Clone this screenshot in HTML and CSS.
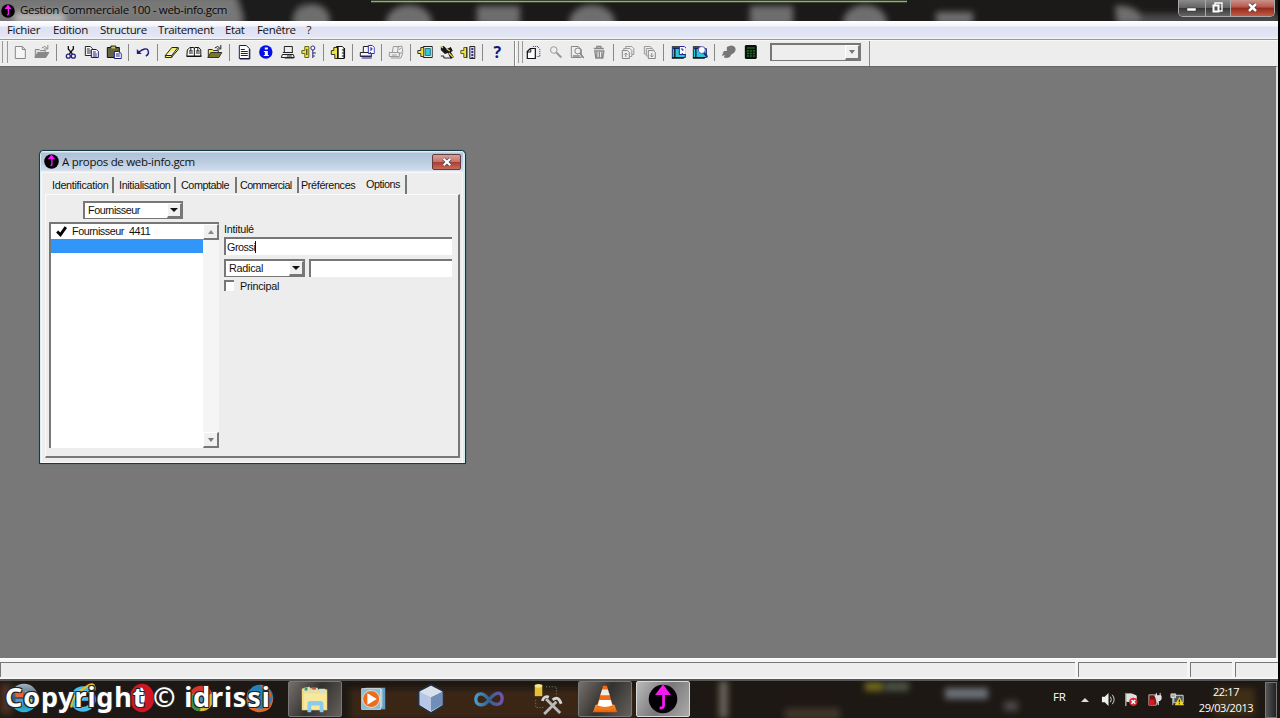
FILE: index.html
```html
<!DOCTYPE html>
<html lang="fr">
<head>
<meta charset="utf-8">
<title>Gestion Commerciale 100 - web-info.gcm</title>
<link rel="stylesheet" href="styles.css">
</head>
<body>
<svg class="defs" width="0" height="0">
  <defs>
    <filter id="soft"><feGaussianBlur stdDeviation="3"/></filter>
    <linearGradient id="orb" x2="0" y2="1"><stop stop-color="#a5b4bf"/><stop offset=".5" stop-color="#39566c"/><stop offset="1" stop-color="#25bde8"/></linearGradient>
    <linearGradient id="orange" x2="0" y2="1"><stop stop-color="#ff9b2a"/><stop offset="1" stop-color="#e75e0a"/></linearGradient>
    <linearGradient id="vs"><stop stop-color="#4b9ac6"/><stop offset=".5" stop-color="#316294"/><stop offset="1" stop-color="#7153ae"/></linearGradient>
    <symbol id="logo" viewBox="0 0 28 28"><circle cx="14" cy="14" r="13.6" fill="#050006"/><path d="M14 1 21 10H16V20Q16 23 12 23V20.5Q13.500 20.500 13.500 19V10H7Z" fill="#f41bf0"/></symbol>
    <symbol id="page" viewBox="0 0 16 16"><path d="M3.500 2.500h7l3 3v9h-10zM10.500 2.500v3h3" fill="#f5f5f5" stroke="#888"/></symbol>
    <symbol id="open-grey" viewBox="0 0 16 16"><path d="M1.500 13V5.500h4l1 1h5v2" fill="#ddd" stroke="#888"/><path d="M4 8.500h11l-3 5H1z" fill="#888" stroke="#888"/><path d="M8 4q3-3 5 0m1-3v4h-4" fill="none" stroke="#888"/></symbol>
    <symbol id="cut" viewBox="0 0 16 16"><path d="M5.500 2v3l4 5M10.500 2v3l-4 5" fill="none" stroke="#111" stroke-width="1.300"/><circle cx="5.500" cy="12.200" r="2" fill="none" stroke="#20207c" stroke-width="1.300"/><circle cx="10.500" cy="12.200" r="2" fill="none" stroke="#20207c" stroke-width="1.300"/></symbol>
    <symbol id="copy" viewBox="0 0 16 16"><path d="M1.500 2.500h5l2 2v7h-7z" fill="#fff" stroke="#222"/><path d="M3 5h3M3 7h4M3 9h4" stroke="#222"/><path d="M7.500 5.500h5l2 2v6h-7z" fill="#fff" stroke="#171779"/><path d="M9 8h3M9 10h4M9 12h4" stroke="#171779"/></symbol>
    <symbol id="paste" viewBox="0 0 16 16"><path d="M1.500 3.500h12v10h-12z" fill="#636343" stroke="#111"/><path d="M5 4.500V2h5v2.500" fill="#d3c648" stroke="#222"/><path d="M8.500 7.500h4l3 2v5h-7z" fill="#fff" stroke="#1d1d80"/><path d="M10 10h4M10 12h4" stroke="#1d1d80"/></symbol>
    <symbol id="undo" viewBox="0 0 16 16"><path d="M4 8q7-5 9-2 2 4-2 6" fill="none" stroke="#202080" stroke-width="1.400"/><path d="M2 5v5h5z" fill="#202080"/></symbol>
    <symbol id="eraser" viewBox="0 0 16 16"><path d="M1.500 11.500 8 3.500h6l-6 8zM1.500 11.500v2h6l7-8v-2M8 11.500v2" fill="#f5ed63" stroke="#222"/></symbol>
    <symbol id="book" viewBox="0 0 16 16"><path d="M1.500 6 4 3.500h4l.5 1 .5-1h4l2 2.500v6.500h-14z" fill="#fff" stroke="#111"/><path d="M8.500 4v9M3 7h4M3 9h4M10 7h4M10 9h4M5 4v3M12 4v3M1 12h15" stroke="#111"/></symbol>
    <symbol id="open" viewBox="0 0 16 16"><path d="M1.500 5.500h4l1 1h5v7h-10z" fill="#efe847" stroke="#333"/><path d="M4 8.500h11l-3 5H1z" fill="#76762a" stroke="#333"/><path d="M8 4q3-3 5 0m1-3v4h-4" fill="none" stroke="#222"/></symbol>
    <symbol id="doc" viewBox="0 0 16 16"><path d="M3.500 1.500h7l3 3v10h-10z" fill="#fff" stroke="#18187e"/><path d="M5 5.500h4M5 7.500h7M5 9.500h7M5 11.500h7" stroke="#18187e"/><path d="M14 5v10H4" fill="none" stroke="#222"/></symbol>
    <symbol id="info" viewBox="0 0 16 16"><circle cx="8" cy="8" r="6.700" fill="#0710e4"/><path d="M7 3.500h3v2H7zM6 7h4v4h1v1H6v-1h1V8H6z" fill="#fff"/></symbol>
    <symbol id="pc" viewBox="0 0 16 16"><path d="M4.500 2.500h8v6h-8zM2.500 10.500h11l1 3h-13zM3 8.500h10" fill="#eee" stroke="#222"/><path d="M7 12h5M5 14h9" stroke="#222"/></symbol>
    <symbol id="key" viewBox="0 0 16 16"><path d="M4 2.500h4v11H4v-4H1v-3h3z" fill="#eee138" stroke="#6c6619"/><path d="M6 5v6" stroke="#222"/><circle cx="12" cy="4" r="2" fill="#fff" stroke="#26267b"/><path d="M12 6v8M12 9h3M12 12h2" stroke="#26267b"/></symbol>
    <symbol id="puzzle" viewBox="0 0 16 16"><path d="M6.500 2.500h6l2 2v10h-8z" fill="#fff" stroke="#111"/><path d="M4 3.500h4v11H5v-4H1.500v-4H4z" fill="#efe23d" stroke="#333"/><path d="M8 2v13M14.500 4v10" stroke="#111" stroke-width="1.500"/><path d="M12 6h2M12 9h2M12 12h2" stroke="#111"/></symbol>
    <symbol id="print" viewBox="0 0 16 16"><path d="M4.500 8.500v-6h6v7M1.500 8.500h11v4h-11z" fill="#f7f7f7" stroke="#222"/><path d="M9.500 1.500h4l2 2v6h-6z" fill="#fff" stroke="#3034ad"/><path d="M2 12h11M11 4h2v2h-2M11.500 8v1M3 14h10" fill="none" stroke="#242488"/></symbol>
    <symbol id="print-grey" viewBox="0 0 16 16"><path d="M4.500 8.500l1-6h5l-1 6M1.500 8.500h10v4h-10zM9 3l5-1 1 6-4 2M3 14h10l2-5" fill="#eee" stroke="#999"/><path d="M11 6l2-2M4 11h5" stroke="#999"/></symbol>
    <symbol id="puzzle-blue" viewBox="0 0 16 16"><path d="M6.500 2.500h9v11h-9z" fill="#eee" stroke="#222"/><path d="M8.500 4.500h5v7h-5z" fill="#30ccd4" stroke="#227984"/><path d="M4 3.500h3v9H4v-3H1v-3h3z" fill="#efe23d" stroke="#333"/></symbol>
    <symbol id="people" viewBox="0 0 16 16"><path d="M2 3l3-1 3 3 4-2 2 4-2 1 3 5-3 2-3-6-3 1-4-4z" fill="#181818"/><path d="M2 2l2 2M8 5l3 2M10 9l4 4" stroke="#d8cd50" stroke-width="1.500"/><path d="M2 12h3v2h7" fill="none" stroke="#222"/></symbol>
    <symbol id="puzzle-list" viewBox="0 0 16 16"><path d="M4 3.500h3v10H4v-4H1v-3h3z" fill="#efe23d" stroke="#645e18"/><path d="M7 3v11" stroke="#222"/><path d="M10 2.500h5v12h-5z" fill="#dcdcf2" stroke="#222"/><path d="M12.500 4v10" stroke="#30308e" stroke-width="2" stroke-dasharray="2 1"/></symbol>
    <symbol id="files" viewBox="0 0 16 16"><path d="M7 2.500h5l2 3v7h-3" fill="none" stroke="#2d2d76" stroke-dasharray="1 1"/><path d="M1.500 7.500l3-3h5v10h-8z" fill="#fff" stroke="#111" stroke-width="1.200"/><path d="M5 4v4H1" fill="none" stroke="#111"/></symbol>
    <symbol id="lens" viewBox="0 0 16 16"><circle cx="6" cy="6" r="3.300" fill="#eee" stroke="#999"/><path d="M8.500 8.500l5 5" stroke="#999" stroke-width="2"/></symbol>
    <symbol id="preview" viewBox="0 0 16 16"><path d="M2.500 2.500h7l3 3v8h-10z" fill="#eee" stroke="#888"/><circle cx="9" cy="7" r="3" fill="#eee" stroke="#888"/><path d="M11 9l4 5M4 12h7" stroke="#888" stroke-width="1.400"/></symbol>
    <symbol id="trash" viewBox="0 0 16 16"><path d="M3 4.500h10M6 4V2.500h4V4M4 7h9l-1 7H5zM6 8v6M8.500 8v6M11 8v6" fill="none" stroke="#888" stroke-width="1.300"/></symbol>
    <symbol id="stack-up" viewBox="0 0 16 16"><path d="M6 4V2.500h6l2 2v6h-2M4 6V4.500h6l2 2v6h-2" fill="none" stroke="#999"/><path d="M2.500 6.500h5l2 2v6h-7zM6 13V9M4.500 10.500 6 9l1.500 1.500" fill="#eee" stroke="#888"/></symbol>
    <symbol id="stack-down" viewBox="0 0 16 16"><path d="M4 10H2.500V2.500h6l2 2M6 12H4.500V4.500h6l2 2" fill="none" stroke="#999"/><path d="M6.500 6.500h5l2 2v6h-7zM10 9v4M8.500 11.500 10 13l1.500-1.500" fill="#eee" stroke="#888"/></symbol>
    <symbol id="cards" viewBox="0 0 16 16"><path d="M1.500 4.500h13v9h-13z" fill="#28c7dc" stroke="#132966"/><path d="M1 3h8M4 5v8M1 14h12" stroke="#111" stroke-width="1.300"/><path d="M8.500 2.500h5l2 2v6h-7z" fill="#fff" stroke="#28289a"/><path d="M10 5h2v2M11.500 9v1" fill="none" stroke="#28289a"/></symbol>
    <symbol id="cards-find" viewBox="0 0 16 16"><path d="M1.500 4.500h13v9h-13z" fill="#28c7dc" stroke="#132966"/><path d="M1 3h8M4 5v8M1 14h12" stroke="#111" stroke-width="1.300"/><circle cx="10" cy="6" r="3.500" fill="#fff" stroke="#5860c6"/><path d="M12 9l4 4" stroke="#222a88" stroke-width="2"/></symbol>
    <symbol id="blob" viewBox="0 0 16 16"><path d="M6 3q5-3 8 0 2 3-1 6-3 1-4 4-4 2-6 0l1-2-3 1 2-5h3z" fill="#777"/></symbol>
    <symbol id="calc" viewBox="0 0 16 16"><path d="M3 1h10l1 1v12l-1 1H3l-1-1V2z" fill="#051407"/><path d="M4 3h8v2H4z" fill="#174b1d"/><path d="M4 7h8M4 9.500h8M4 12h8" stroke="#27722b" stroke-width="1.500" stroke-dasharray="2 1"/></symbol>
  </defs>
</svg>
<div class="screen">
  <div class="app">
    <header class="titlebar">
      <svg class="scenery" width="1280" height="21">
        <rect width="1280" height="21" fill="#1c1a19"/>
        <g filter="url(#soft)" fill="#6e6e6e"><rect x="-10" y="-5" width="252" height="32" fill="#777"/><rect x="15" y="13" width="50" height="9" fill="#bbb"/><path d="M235-5h70l-12 30h-48z" fill="#1a1a1a"/><ellipse cx="312" cy="20" rx="18" ry="16"/><ellipse cx="409" cy="23" rx="23" ry="18"/><ellipse cx="592" cy="23" rx="23" ry="18"/><ellipse cx="865" cy="23" rx="22" ry="18"/><path d="M477 6h43v19h-43zM750 6h43v19h-43zM936 12h37v12h-37zM1115 6q22-3 33 18h-31z"/><path d="M1140 14h140v12h-140z" fill="#4b4b4b"/></g>
        <path d="M371 1.500h536" stroke="#8bb765" stroke-width="1.500"/>
      </svg>
      <svg class="app-logo"><use href="#logo"/></svg>
      <span class="app-title">Gestion Commerciale 100 - web-info.gcm</span>
      <div class="win-buttons">
        <span class="wb min"><svg width="26" height="16"><path d="M8 8h9v3H8z" fill="#fff" stroke="#333" stroke-width=".5"/></svg></span>
        <span class="wb max"><svg width="24" height="16"><path d="M9 3h7v8h-7z" fill="none" stroke="#fff" stroke-width="1.300"/><path d="M7.500 5.500h5v6h-5z" fill="#555" stroke="#fff" stroke-width="2"/></svg></span>
        <span class="wb close"><svg width="43" height="16"><path d="M18 4l7 7M25 4l-7 7" stroke="#533" stroke-width="4"/><path d="M18 4l7 7M25 4l-7 7" stroke="#fff" stroke-width="2.500"/></svg></span>
      </div>
    </header>
    <nav class="menu"><span class="m1">Fichier</span><span class="m2">Edition</span><span class="m3">Structure</span><span class="m4">Traitement</span><span class="m5">Etat</span><span class="m6">Fenêtre</span><span>?</span></nav>
    <div class="toolbar">
      <div class="band first"><i class="grip"></i>
        <svg><use href="#page"/></svg><svg><use href="#open-grey"/></svg><i class="sep"></i>
        <svg><use href="#cut"/></svg><svg><use href="#copy"/></svg><svg><use href="#paste"/></svg><i class="sep"></i>
        <svg><use href="#undo"/></svg><i class="sep"></i>
        <svg><use href="#eraser"/></svg><svg><use href="#book"/></svg><svg><use href="#open"/></svg><i class="sep"></i>
        <svg><use href="#doc"/></svg><svg><use href="#info"/></svg><svg><use href="#pc"/></svg><svg><use href="#key"/></svg><i class="sep"></i>
        <svg><use href="#puzzle"/></svg><i class="sep"></i><svg><use href="#print"/></svg><i class="sep"></i><svg><use href="#print-grey"/></svg><i class="sep"></i>
        <svg><use href="#puzzle-blue"/></svg><svg><use href="#people"/></svg><svg><use href="#puzzle-list"/></svg><i class="sep"></i><b class="help">?</b>
      </div>
      <div class="band second"><i class="grip"></i>
        <svg><use href="#files"/></svg><svg><use href="#lens"/></svg><svg><use href="#preview"/></svg><svg><use href="#trash"/></svg><i class="sep"></i>
        <svg><use href="#stack-up"/></svg><svg><use href="#stack-down"/></svg><i class="sep"></i><svg><use href="#cards"/></svg><svg><use href="#cards-find"/></svg><i class="sep"></i>
        <svg><use href="#blob"/></svg><svg><use href="#calc"/></svg>
        <div class="combo tool-combo"><span></span><i class="drop"></i></div>
      </div>
    </div>
    <main class="workspace">
      <section class="dialog">
        <div class="dialog-title"><svg><use href="#logo"/></svg><span>A propos de web-info.gcm</span><i class="dialog-close"><svg viewBox="0 0 28 15"><path d="M11 4l7 7M18 4l-7 7" stroke="#454c5c" stroke-width="4"/><path d="M11 4l7 7M18 4l-7 7" stroke="#fff" stroke-width="2.300"/></svg></i></div>
        <div class="dialog-body">
          <div class="tabs"><span class="t1">Identification</span><span class="t2">Initialisation</span><span class="t3">Comptable</span><span class="t4">Commercial</span><span class="t5">Préférences</span><span class="t6">Options</span></div>
          <div class="panel">
            <div class="left">
              <div class="combo type"><span>Fournisseur</span><i class="drop"></i></div>
              <div class="listbox">
                <div class="items"><div class="item"><svg viewBox="0 0 12 12"><path d="M2 6l3 3 5-7" fill="none" stroke="#000" stroke-width="2.700"/></svg><span>Fournisseur&nbsp; 4411</span></div><div class="item selected"></div></div>
                <div class="scroll"><i class="up"></i><i class="drop"></i></div>
              </div>
            </div>
            <div class="form">
              <label>Intitulé</label>
              <div class="field"><span>Grossi</span><i class="caret"></i></div>
              <div class="row"><div class="combo radical"><span>Radical</span><i class="drop"></i></div><div class="field"></div></div>
              <div class="check"><i></i><span>Principal</span></div>
            </div>
          </div>
        </div>
      </section>
    </main>
    <footer class="status"><span class="s1"></span><span class="s2"></span><span class="s3"></span><span class="s4"></span></footer>
  </div>
  <footer class="taskbar">
    <svg class="scenery" width="1280" height="37"><rect width="1280" height="37" fill="#1d1813"/><g filter="url(#soft)"><path d="M350 8h285v30H350z" fill="#3a2817"/><path d="M0 3h12v30H0z" fill="#503221"/><path d="M719 0h9v37h-9z" fill="#666056"/><path d="M865 1h18v9h-18z" fill="#736b20"/><path d="M885 1h24v9h-24z" fill="#4c5446"/><path d="M945 7h43v11h-43z" fill="#6b7178"/><path d="M785 27h55v12h-55z" fill="#413629"/><path d="M1004 20h14v10h-14z" fill="#49464a"/><path d="M1215 7h40v28h-40z" fill="#3d2d16"/></g></svg>
    <div class="launchers">
      <svg viewBox="0 0 32 36"><circle cx="16" cy="18" r="15" fill="url(#orb)"/><path d="M7 12l8-2v7H7z" fill="#e96339"/><path d="M17 10l7 2v6l-7-1z" fill="#87ba4c"/><path d="M7 19h8v7l-8-2z" fill="#4c9ad8"/><path d="M17 19h8l-1 5-7 2z" fill="#e7bf43"/></svg>
      <svg viewBox="0 0 32 36"><circle cx="16" cy="19" r="11" fill="none" stroke="#4bbce9" stroke-width="5"/><path d="M7 19h21" stroke="#4bbce9" stroke-width="4"/><path d="M4 28Q1 17 23 4q6-2 5 6" fill="none" stroke="#e5bc30" stroke-width="2.500"/></svg>
      <svg viewBox="0 0 32 36"><ellipse cx="16" cy="18" rx="13" ry="15" fill="#ce1723"/><ellipse cx="15" cy="17" rx="4" ry="10" fill="#fff"/></svg>
      <svg viewBox="0 0 32 36"><circle cx="16" cy="19" r="13" fill="#ddbc36"/><path d="M4 13A13 13 0 0 1 28 13L17 18z" fill="#cf3830"/><path d="M4 13A13 13 0 0 0 15 32l2-13z" fill="#388b42"/><circle cx="16" cy="19" r="6" fill="#478bd0" stroke="#ddd" stroke-width="2"/></svg>
      <svg viewBox="0 0 32 36"><circle cx="16" cy="18" r="14" fill="#2481bc"/><path d="M4 8q-3 16 8 21 14 3 18-13 0 18-16 17Q-4 31 4 8M16 4q12 1 12 14l-7-7z" fill="#df6628"/></svg>
    </div>
    <div class="tasks">
      <span class="task active"><svg viewBox="0 0 34 34"><path d="M3 6l8-2 2 3h17v22H3z" fill="#f4dc7c"/><path d="M5 5h7v5H5zM13 5h7v5h-7zM21 6h7v5h-7z" fill="#d8e3c5"/><path d="M6 5h3v3H6z" fill="#3c9c54"/><path d="M14 5h4v2h-4z" fill="#d15036"/><path d="M5 11h24v17H5z" fill="#f8e89f"/><path d="M9 31v-9q0-3 3-3h11q3 0 3 3v9h-4v-7h-9v7z" fill="#8accec"/></svg></span>
      <span class="task"><svg viewBox="0 0 34 34"><path d="M9 5h21v23H9z" fill="#649ec5"/><path d="M7 6h20v20H7z" fill="#b3d3df"/><path d="M5 6h20v22H5z" fill="#85bed9" stroke="#d1d8d8"/><circle cx="15" cy="17" r="9" fill="#ed6b1c" stroke="#e6e2de"/><path d="M11 11v12l10-6z" fill="#fff"/></svg></span>
      <span class="task"><svg viewBox="0 0 34 34"><path d="M17 2l13 7v15l-13 8-13-8V9z" fill="#f2f5fb" stroke="#243147" stroke-width="2"/><path d="M5 9l12 6v15L5 23z" fill="#b7c6e4"/><path d="M29 9l-12 6v15l12-7z" fill="#6f8eb8"/><path d="M5 9l12-6 12 6-12 6z" fill="#d8e0ea"/></svg></span>
      <span class="task"><svg viewBox="0 0 34 34"><path d="M17 18C12 10 4 9 3 17c0 8 9 8 14 1s13-11 14-2c0 9-9 8-14 2" fill="none" stroke="url(#vs)" stroke-width="3.500"/></svg></span>
      <span class="task"><svg viewBox="0 0 34 34"><path d="M4 2h8v12H4z" fill="#e6bf36"/><ellipse cx="8" cy="3" rx="4" ry="2" fill="#f5e58c"/><path d="M16 4h11v10M5 18v8h10" fill="none" stroke="#829184" stroke-dasharray="1 2"/><path d="M14 33l13-13M16 17l15 15" stroke="#bbb" stroke-width="3"/><path d="M12 19q2-6 7-4M23 18q6-5 9 4" fill="none" stroke="#d5d5d5" stroke-width="3"/></svg></span>
      <span class="task active"><svg viewBox="0 0 34 34"><path d="M7 23h20l3 8H4z" fill="url(#orange)"/><path d="M15 3h4l7 23H8z" fill="#f06d16"/><path d="M14 7h6l2 6H12z" fill="#f2eee7"/><path d="M11 18h12l2 6q-8 3-16 0z" fill="#fff"/></svg></span>
      <span class="task current"><svg viewBox="0 0 28 28"><circle cx="14" cy="14" r="12.500" fill="#050006"/><path d="M14 1 21 10.500H7z" fill="#f41bf0"/><path d="M14.500 9V20Q14.500 22 11 22" fill="none" stroke="#f41bf0" stroke-width="2.400"/></svg></span>
    </div>
    <div class="tray"><span class="lang">FR</span><i class="tri"></i>
      <svg class="sound" viewBox="0 0 16 16"><path d="M1 5h3l4-4v14l-4-4H1z" fill="#eee"/><path d="M10 5q2 3 0 6M12 3q4 5 0 10" fill="none" stroke="#ddd"/></svg>
      <svg class="flag" viewBox="0 0 16 16"><path d="M2 1v14M3 2h5l5 2v6H3z" fill="#ddd" stroke="#eee"/><circle cx="10" cy="10.500" r="4.500" fill="#d72d31"/><path d="M8 8.500l4 4M12 8.500l-4 4" stroke="#fff" stroke-width="1.500"/></svg>
      <svg class="battery" viewBox="0 0 16 16"><path d="M2 3h8v11H2z" fill="#771111" stroke="#bbb"/><path d="M10 1v3M14 1v3M8 4h7v4l-3 2v4" fill="#ddd" stroke="#eee"/><path d="M2 8h6v6H2z" fill="#d31c20"/></svg>
      <svg class="network" viewBox="0 0 16 16"><path d="M4 3.500h10v8H4z" fill="#455660" stroke="#ddd"/><path d="M1 2h5v4H1zM3 6v8" fill="#aaa" stroke="#ddd"/><path d="M10 5l5 9H5z" fill="#f1d423"/><path d="M10 8v3M10 12v1" stroke="#322" stroke-width="1.300"/></svg>
      <div class="clock"><span>22:17</span><span>29/03/2013</span></div><i class="peek"></i>
    </div>
    <div class="watermark">Copyright © idrissi</div>
  </footer>
</div>
</body>
</html>
```
FILE: styles.css
```css
* { box-sizing: border-box; }
body { margin: 0; background: #000; }
.defs { position: absolute; }
.screen { width: 1280px; height: 718px; display: flex; flex-direction: column; overflow: hidden; font-family: "Open Sans", "Noto Sans", sans-serif; font-size: 11px; color: #111; }
.app { width: 1278px; height: 681px; display: flex; flex-direction: column; }
.titlebar { height: 21px; position: relative; display: flex; overflow: hidden; align-items: center; }
.scenery { position: absolute; left: 0; top: 0; z-index: 0; }
.app-logo { width: 14px; height: 14px; position: relative; margin-left: 1px; }
.app-title { position: relative; margin-left: 5px; font-size: 11.500px; letter-spacing: -.33px; line-height: 20px; padding-bottom: 1px; color: #080808; white-space: nowrap; text-shadow: 0 0 5px #999; }
.win-buttons { position: relative; margin-left: auto; margin-right: 3px; align-self: flex-start; height: 17px; display: flex; border: 1px solid #aaa; border-top: 0; border-radius: 0 0 5px 5px; overflow: hidden; }
.wb { height: 16px; background: linear-gradient(#8b8b8b, #626262 48%, #343434 50%, #666); border-right: 1px solid #aaa; }
.wb svg { display: block; }
.wb.close { background: linear-gradient(#c9928c, #b95549 45%, #91291d 50%, #c55a45); border: 0; }
.menu { height: 19px; display: flex; padding-left: 7px; background: linear-gradient(#fff 0, #f3f4fb 28%, #dde1f1 35%, #e4e6f5 85%, #f2f2f7); border-bottom: 1px solid #999; line-height: 17px; font-size: 11.500px; letter-spacing: -.35px; white-space: nowrap; }
.m1 { width: 46px; } .m2 { width: 47px; } .m3 { width: 58px; } .m4 { width: 67px; } .m5 { width: 32px; } .m6 { width: 49.500px; }
.toolbar { height: 26px; display: flex; background: #ededed; border-top: 1px solid #f9f9f4; }
.band { display: flex; align-items: center; border-right: 1px solid #888; height: 25px; padding-bottom: 3px; }
.band.first { width: 515px; padding-left: 2px; }
.band.second { width: 355px; padding-left: 2px; border-left: 1px solid #fff; }
.grip { width: 6px; height: 22px; border-left: 1px solid #999; border-right: 1px solid #999; margin-right: 1.200px; }
.second .grip { margin-right: 0; width: 5px; }
.band > svg { width: 21.650px; height: 16px; padding: 0 2.800px; flex: none; position: relative; }
.sep { width: 1px; height: 17px; margin: 0 3.180px; background: #888; flex: none; }
.help { width: 21.600px; text-align: center; color: #17177b; font-size: 16px; line-height: 17px; }
.combo { display: flex; border: 1px solid #777; border-top-width: 2px; border-left-width: 2px; background: #fff; height: 17px; }
.combo span { flex: 1; padding-left: 3px; line-height: 14px; }
.drop, .up { width: 15px; height: 14px; display: flex; align-items: center; justify-content: center; background: #f0f0f0; border: 1px solid #fff; border-right: 2px solid #777; border-bottom: 2px solid #777; }
.drop::after { content: ""; border: 4px solid transparent; border-top: 4px solid #111; border-bottom: 0; }
.up::after { content: ""; border: 3.500px solid transparent; border-bottom: 4px solid #888; border-top: 0; }
.tool-combo { width: 91px; height: 18px; margin-left: 8.500px; background: #eee; }
.tool-combo .drop { height: 15px; }
.tool-combo .drop::after, .scroll .drop::after { border-top-color: #777; border-left-width: 3.500px; border-right-width: 3.500px; }
.workspace { height: 592px; position: relative; background: #787878; border-top: 1px solid #666; border-right: 2px solid #ddd; }
.dialog { position: absolute; left: 39px; top: 83px; width: 427px; height: 314px; display: flex; flex-direction: column; padding: 0 2px 2px 1px; background: #d5edf2; border: 1px solid #163b40; border-right-color: #063d42; border-radius: 5px 5px 0 0; overflow: hidden; box-shadow: 0 0 1px #174f56; }
.dialog-title { height: 21px; flex: none; display: flex; align-items: center; padding: 0 2px 0 3px; background: linear-gradient(#edf3f8 0, #afc2d8 12%, #bdcde0 55%, #cddbed 90%, #f0f3f8); font-size: 11.500px; }
.dialog-title > svg { width: 15px; height: 15px; }
.dialog-title > span { margin-left: 3px; letter-spacing: -.3px; }
.dialog-close { width: 29px; height: 16px; margin-left: auto; background: linear-gradient(#d6a19b, #c77369 48%, #a93b32 50%, #c86d56); border: 1px solid #633b40; border-radius: 2px; }
.dialog-close svg { width: 27px; height: 14px; display: block; }
.dialog-body { flex: 1; padding: 2px 2px 4px 3px; background: #ededed; border: 1px solid #f8f8f8; font-family: "Liberation Sans", sans-serif; font-size: 10.800px; letter-spacing: -.46px; }
.tabs { height: 19px; display: flex; white-space: nowrap; }
.tabs span { height: 16px; margin-top: 2px; border-right: 2px solid #777; line-height: 17px; }
.tabs .t1 { width: 69px; padding-left: 7px; letter-spacing: -.3px; } .tabs .t2 { width: 62px; padding-left: 5px; letter-spacing: -.35px; } .tabs .t3 { width: 61px; padding-left: 5px; } .tabs .t4 { width: 62px; padding-left: 3px; letter-spacing: -.6px; }
.tabs .t5 { width: 61px; padding-left: 2px; border-right: 0; letter-spacing: -.35px; }
.tabs .t6 { width: 47px; padding-left: 6px; height: 19px; margin-top: 0; line-height: 18px; }
.panel { height: 264px; display: flex; border-left: 1px solid #fafafa; border-top: 1px solid #fafafa; border-right: 2px solid #777; border-bottom: 2px solid #777; padding: 6px 6px 0 3px; }
.left { width: 170px; }
.type { width: 100px; margin-left: 34px; margin-bottom: 3px; height: 18px; }
.type .drop { height: 15px; }
.listbox { height: 226px; width: 170px; display: flex; border-top: 2px solid #777; border-left: 2px solid #777; background: #f5f5f5; }
.items { width: 152px; background: #fff; }
.item { height: 15px; display: flex; align-items: center; white-space: nowrap; }
.item span { padding-bottom: 2px; }
.item svg { width: 13px; height: 13px; margin-left: 4px; margin-right: 4px; }
.item.selected { background: #3296f8; height: 14px; }
.scroll { width: 16px; height: 224px; display: flex; flex-direction: column; justify-content: space-between; }
.scroll .up, .scroll .drop { width: 16px; height: 16px; }
.form { margin-left: 5px; width: 229px; padding-top: 21px; }
.form label { display: block; height: 15px; line-height: 14px; letter-spacing: -.25px; }
.field { height: 18px; border-left: 2px solid #777; border-top: 2px solid #777; background: #fff; display: flex; align-items: center; padding-left: 1px; }
.caret { width: 1px; height: 12px; background: #111; }
.row { display: flex; gap: 4px; margin-top: 4px; }
.radical { width: 81px; height: 18px; }
.radical .drop { height: 15px; }
.radical span, .check span { letter-spacing: -.25px; }
.row .field { flex: 1; }
.check { display: flex; align-items: center; height: 17px; }
.check i { width: 10px; height: 11px; background: #fff; border-left: 2px solid #777; border-top: 2px solid #777; }
.check span { margin-left: 6px; }
.status { height: 23px; display: flex; gap: 3px; padding: 3px 0 2px; background: #f5f5f5; border-top: 1px solid #fff; border-bottom: 2px solid #555; }
.status span { border-top: 1px solid #777; border-left: 1px solid #777; background: #ededed; }
.s1 { width: 1075px; } .s2 { width: 109px; } .s3 { width: 42px; } .s4 { flex: 1; }
.taskbar { height: 37px; position: relative; display: flex; background: #1d1813; }
.launchers { position: relative; display: flex; width: 288px; padding-left: 7px; }
.launchers svg { width: 34px; height: 34px; flex: none; margin-right: 25px; }
.tasks { position: relative; display: flex; gap: 4px; }
.task { width: 54px; height: 36px; display: flex; justify-content: center; align-items: center; }
.task svg { width: 32px; height: 32px; }
.task.active { border: 1px solid #777; border-radius: 2px; background: linear-gradient(120deg, #77706b, #343230 48%, #3d3b39 60%, #66605b); }
.task.current { border: 1px solid #d9d9d9; border-radius: 2px; background: linear-gradient(120deg, #bbb, #787878 50%, #aaa); }
.tray { position: relative; display: flex; align-items: center; margin-left: auto; width: 227px; color: #fff; }
.lang { width: 28px; height: 21px; font-size: 11.500px; letter-spacing: -.3px; }
.tri { border: 4px solid transparent; border-bottom: 4px solid #ddd; border-top: 0; margin-right: 12px; }
.tray svg { width: 15px; height: 15px; flex: none; margin-right: 8px; }
.clock { width: 66px; height: 34px; display: flex; flex-direction: column; align-items: center; font-size: 11px; line-height: 16px; padding-top: 1px; letter-spacing: -.4px; }
.peek { width: 12px; height: 36px; margin-left: 6px; border: 1px solid #777; background: linear-gradient(90deg, #555, #222); }
.watermark { position: absolute; left: 5px; top: -3px; z-index: 2; color: #fff; font-family: "Noto Sans", sans-serif; font-size: 27px; letter-spacing: .84px; line-height: 37px; font-weight: 700; white-space: nowrap; text-shadow: -1px -1px #222, 1px -1px #222, -1px 1px #222, 1px 1px #222; }
```
